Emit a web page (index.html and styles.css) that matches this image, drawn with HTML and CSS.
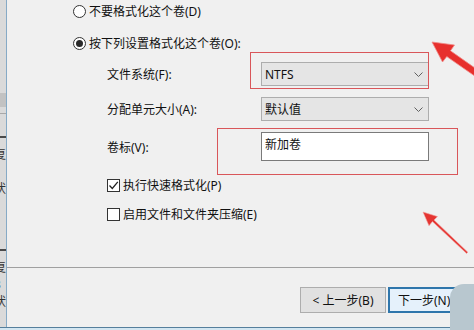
FILE: index.html
```html
<!DOCTYPE html>
<html lang="zh-CN">
<head>
<meta charset="utf-8">
<title>格式化分区</title>
<link rel="stylesheet" href="styles.css">
</head>
<body>
<div class="screen">
  <div class="behind">
    <div class="b-block"></div>
    <div class="b-line"></div>
    <div class="b-tab"></div>
    <div class="b-text">复<br>1<br>状</div>
    <div class="b-tab b-tab2"></div>
    <div class="b-text">复<br>3<br>状</div>
  </div>
  <div class="dialog">
    <div class="content">
      <div class="radio-row"><span class="radio"></span><span>不要格式化这个卷(D)</span></div>
      <div class="radio-row second"><span class="radio checked"></span><span>按下列设置格式化这个卷(O):</span></div>
      <div class="form">
        <span class="lbl">文件系统(F):</span>
        <div class="select"><span>NTFS</span><svg class="chev" width="9" height="5" viewBox="0 0 9 5"><polyline points="0.5,0.5 4.5,4.5 8.5,0.5" fill="none" stroke="#606060" stroke-width="1"/></svg></div>
        <span class="lbl">分配单元大小(A):</span>
        <div class="select"><span>默认值</span><svg class="chev" width="9" height="5" viewBox="0 0 9 5"><polyline points="0.5,0.5 4.5,4.5 8.5,0.5" fill="none" stroke="#606060" stroke-width="1"/></svg></div>
        <span class="lbl">卷标(V):</span>
        <div class="input">新加卷</div>
      </div>
      <div class="check-row first"><span class="check on"><svg width="11" height="11" viewBox="0 0 11 11"><polyline points="1.5,5.5 4.3,8.5 9.8,1.8" fill="none" stroke="#222" stroke-width="1.3"/></svg></span><span>执行快速格式化(P)</span></div>
      <div class="check-row"><span class="check"></span><span>启用文件和文件夹压缩(E)</span></div>
    </div>
    <div class="sep"></div>
    <div class="buttons">
      <div class="btn">&lt; 上一步(B)</div>
      <div class="btn primary">下一步(N)</div>
    </div>
  </div>
</div>
<div class="mark box1"></div>
<div class="mark box2"></div>
<div class="blob"></div>
<svg class="arrows" width="474" height="330" viewBox="0 0 474 330">
  <polygon fill="#e7302d" stroke="#f08a88" stroke-width="0.8" stroke-linejoin="round"
    points="432,42 454.5,45 450.5,50.8 482,73 479,79 446.8,56.6 442.5,62"/>
  <polygon fill="#e53532" stroke="#f2a2a0" stroke-width="0.6" stroke-linejoin="round"
    points="423,212 437.5,216.6 434,220 467.8,252.2 466.6,253.4 432.4,221.6 429,225.8"/>
</svg>
</body>
</html>
```

FILE: styles.css
```css
* { box-sizing: border-box; }
html, body {
  margin: 0;
  padding: 0;
}
body {
  width: 474px;
  height: 330px;
  overflow: hidden;
  position: relative;
  background: #d3e6f1;
  font-family: "Noto Sans", "Noto Sans CJK SC", sans-serif;
  font-size: 12px;
  color: #111;
}
.screen {
  display: flex;
  height: 328px;
  border-bottom: 1px solid #557f9c;
}
.behind {
  width: 6px;
  flex: none;
  background: #dadada;
  overflow: hidden;
  display: flex;
  flex-direction: column;
}
.b-block {
  margin-top: 93px;
  height: 14px;
  background: #c2c2c2;
}
.b-line {
  margin-top: 6px;
  height: 1px;
  background: #a8a8a8;
}
.b-tab {
  margin-top: 22px;
  height: 2px;
  background: #4a4a4a;
}
.b-tab2 { margin-top: 52px; }
.b-text {
  margin-top: 8px;
  margin-left: -6px;
  width: 14px;
  font-size: 12px;
  line-height: 17px;
  color: #333;
}
.dialog {
  flex: 1;
  min-width: 0;
  background: #f0f0f0;
  border-left: 1px solid #86aac6;
  display: flex;
  flex-direction: column;
}
.content {
  height: 267px;
  flex: none;
  padding-left: 66px;
}
.radio-row {
  height: 22px;
  display: flex;
  align-items: center;
  gap: 3px;
  white-space: nowrap;
}
.radio-row.second { margin-top: 10px; }
.radio {
  width: 13px;
  height: 13px;
  border: 1px solid #333;
  border-radius: 50%;
  background: #fff;
  flex: none;
  display: flex;
  align-items: center;
  justify-content: center;
}
.radio.checked::after {
  content: "";
  width: 7px;
  height: 7px;
  border-radius: 50%;
  background: #2a2a2a;
}
.form {
  margin-top: 8px;
  margin-left: 34px;
  display: grid;
  grid-template-columns: 154px 168px;
  row-gap: 11px;
  align-items: center;
}
.lbl { white-space: nowrap; }
.select {
  height: 24px;
  background: #e5e5e5;
  border: 1px solid #adadad;
  display: flex;
  align-items: center;
  justify-content: space-between;
  padding: 0 5px 0 3px;
}
.chev { flex: none; }
.input {
  height: 29px;
  background: #fff;
  border: 1px solid #7a7a7a;
  padding: 4px 0 0 3px;
  line-height: 16px;
}
.check-row {
  margin-left: 34px;
  height: 22px;
  display: flex;
  align-items: center;
  gap: 3px;
  white-space: nowrap;
  margin-top: 7px;
}
.check-row.first { margin-top: 13px; }
.check {
  width: 13px;
  height: 13px;
  flex: none;
  border: 1px solid #333;
  background: #fff;
  display: flex;
  align-items: center;
  justify-content: center;
}
.sep {
  height: 1px;
  flex: none;
  background: #a0a0a0;
}
.buttons {
  flex: 1;
  display: flex;
  align-items: flex-start;
  padding: 19px 0 0 293px;
  gap: 2px;
}
.btn {
  flex: none;
  width: 86px;
  height: 26px;
  background: #e1e1e1;
  border: 1px solid #adadad;
  display: flex;
  align-items: center;
  justify-content: center;
  white-space: nowrap;
}
.btn.primary {
  background: #e5f1fb;
  border: 2px solid #2f76ab;
  justify-content: flex-start;
  padding-left: 8px;
}
.mark {
  position: absolute;
  border: 1px solid #d9565a;
}
.box1 { left: 250px; top: 52px; width: 179px; height: 37px; }
.box2 { left: 217px; top: 128px; width: 241px; height: 47px; }
.blob {
  position: absolute;
  left: 450px;
  top: 284px;
  width: 44px;
  height: 60px;
  border-radius: 14px;
  background: #b8c7cf;
}
.arrows {
  position: absolute;
  left: 0;
  top: 0;
}
```
